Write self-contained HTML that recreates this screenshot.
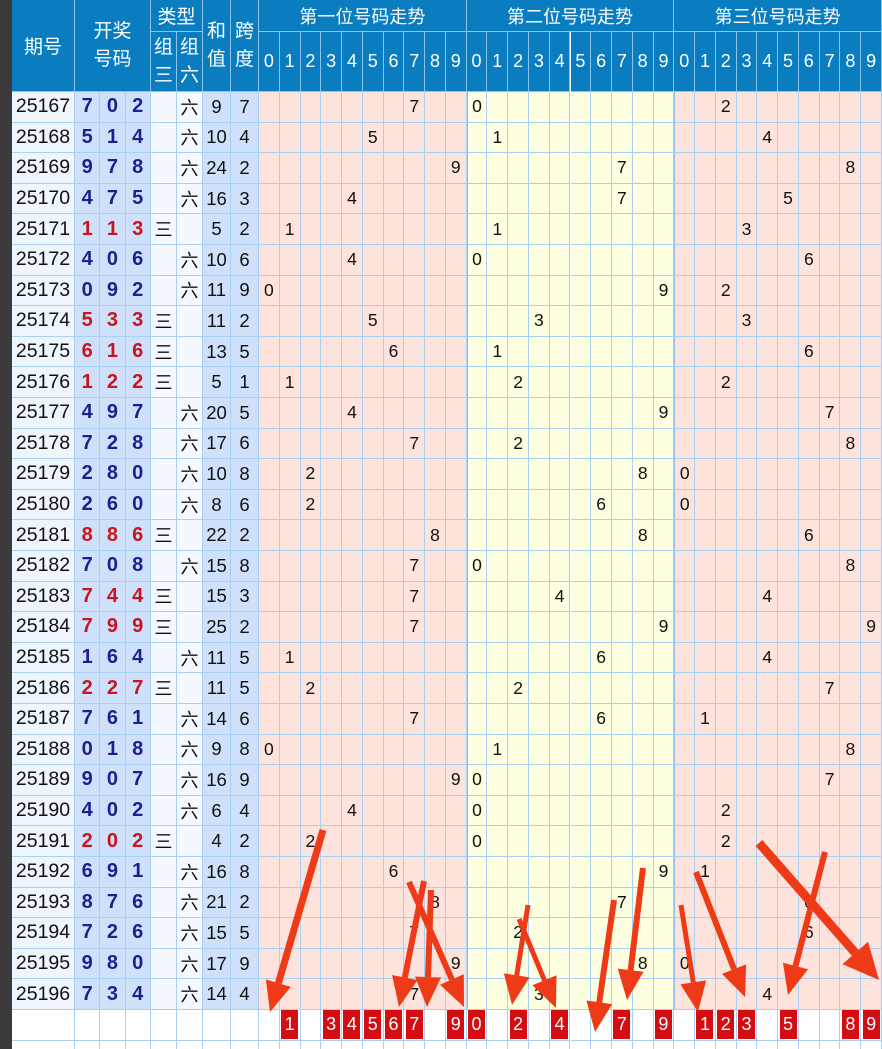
<!DOCTYPE html><html><head><meta charset="utf-8"><style>
html,body{margin:0;padding:0;width:882px;height:1049px;overflow:hidden;background:#fff;font-family:"Liberation Sans","Noto Sans CJK SC",sans-serif}
#c{position:relative;width:882px;height:1049px}
.d{position:absolute;box-sizing:border-box;display:flex;align-items:center;justify-content:center;color:#111}
.h{background:#0a7dc1;color:#fff;border-right:1.5px solid #8cc4ef;border-bottom:1.5px solid #8cc4ef}
.g{border-right:1px solid #a9d0f2;border-bottom:1px solid #a9d0f2}
</style></head><body><div id="c"></div>
<script>
var C=document.getElementById('c');
function D(x,y,w,h,cls,t,st){var e=document.createElement('div');e.className='d '+cls;e.style.cssText='left:'+x+'px;top:'+y+'px;width:'+w+'px;height:'+h+'px;'+(st||'');e.innerHTML=t||'';C.appendChild(e);return e;}
D(0,0,12,1049,'','','background:#3a3a3a');
var fs='font-size:19px;';
D(12,0,63,92,'h','期号',fs);
D(75,0,76,92,'h','开奖<br>号码',fs+'line-height:28px;text-align:center');
D(151,0,52,32,'h','类型',fs);
D(151,32,26,60,'h','组<br>三',fs+'line-height:28px;text-align:center');
D(177,32,26,60,'h','组<br>六',fs+'line-height:28px;text-align:center');
D(203,0,28,92,'h','和<br>值',fs+'line-height:28px;text-align:center');
D(231,0,28,92,'h','跨<br>度',fs+'line-height:28px;text-align:center');
var X0=259,W=(882-X0)/30;
var titles=['第一位号码走势','第二位号码走势','第三位号码走势'];
for(var g=0;g<3;g++){D(X0+g*10*W,0,10*W,32,'h',titles[g],'font-size:18px');
for(var k=0;k<10;k++)D(X0+(g*10+k)*W,32,W,60,'h',''+k,'font-size:18px');}
var data=[[25167,7,0,2,0,9,7],[25168,5,1,4,0,10,4],[25169,9,7,8,0,24,2],[25170,4,7,5,0,16,3],[25171,1,1,3,1,5,2],[25172,4,0,6,0,10,6],[25173,0,9,2,0,11,9],[25174,5,3,3,1,11,2],[25175,6,1,6,1,13,5],[25176,1,2,2,1,5,1],[25177,4,9,7,0,20,5],[25178,7,2,8,0,17,6],[25179,2,8,0,0,10,8],[25180,2,6,0,0,8,6],[25181,8,8,6,1,22,2],[25182,7,0,8,0,15,8],[25183,7,4,4,1,15,3],[25184,7,9,9,1,25,2],[25185,1,6,4,0,11,5],[25186,2,2,7,1,11,5],[25187,7,6,1,0,14,6],[25188,0,1,8,0,9,8],[25189,9,0,7,0,16,9],[25190,4,0,2,0,6,4],[25191,2,0,2,1,4,2],[25192,6,9,1,0,16,8],[25193,8,7,6,0,21,2],[25194,7,2,6,0,15,5],[25195,9,8,0,0,17,9],[25196,7,3,4,0,14,4]];
var RH=30.6,Y0=92;
data.forEach(function(r,i){var y=Y0+i*RH;
D(12,y,63,RH,'g',''+r[0],'background:#eef5fd;font-size:19.5px');
var col=r[4]?'#c8141e':'#1c1f8f';
for(var j=0;j<3;j++)D(75+j*25.3,y,25.3,RH,'g',''+r[1+j],'background:#cfe0fa;font-weight:bold;font-size:20px;color:'+col);
D(151,y,26,RH,'g',r[4]?'三':'','background:#f4f9ff;font-size:18px');
D(177,y,26,RH,'g',r[4]?'':'六','background:#f4f9ff;font-size:18px');
D(203,y,28,RH,'g',''+r[5],'background:#cfe0fa;font-size:18.5px');
D(231,y,28,RH,'g',''+r[6],'background:#cfe0fa;font-size:18.5px');
for(var c=0;c<30;c++){var g=Math.floor(c/10),k=c%10;var bg=g==1?'#fefee0':'#fde3dc';
D(X0+c*W,y,W,RH,'g',k==r[1+g]?''+k:'','background:'+bg+';font-size:17.5px'+(c%10==0&&c?';border-left:1.5px solid #8cc4ef':''));}
});
var yb=Y0+30*RH;
var hits=[[1,3,4,5,6,7,9],[0,2,4,7,9],[1,2,3,5,8,9]];
for(var rr=0;rr<2;rr++){var y=yb+rr*RH;
D(12,y,63,RH,'g');for(var j=0;j<3;j++)D(75+j*25.3,y,25.3,RH,'g');
D(151,y,26,RH,'g');D(177,y,26,RH,'g');D(203,y,28,RH,'g');D(231,y,28,RH,'g');
for(var c=0;c<30;c++){var g=Math.floor(c/10),k=c%10;var e=D(X0+c*W,y,W,RH,'g');
if(rr==0&&hits[g].indexOf(k)>=0){e.innerHTML='<span style="display:flex;align-items:center;justify-content:center;width:17px;height:29px;background:#d40d12;color:#fff;font-size:18px">'+k+'</span>';}}}
var A=[[323,830,270,1012,6],[424,881,399,1007,5],[409,882,464,1007,5],[431,890,427,1007,5],[528,905,512,1005,4],[519,919,556,1008,4],[614,900,595,1032,5],[643,868,627,1000,5],[681,905,698,1012,4],[696,872,745,997,5],[825,852,788,995,5],[759,843,879,980,8]];
var s='<svg width="882" height="1049" style="position:absolute;left:0;top:0">';
A.forEach(function(a){var dx=a[2]-a[0],dy=a[3]-a[1],L=Math.hypot(dx,dy),ux=dx/L,uy=dy/L,hl=a[4]>6?36:30,hw=a[4]>6?17:13;
var bx=a[2]-ux*hl,by=a[3]-uy*hl;
s+='<line x1="'+a[0]+'" y1="'+a[1]+'" x2="'+bx+'" y2="'+by+'" stroke="#ef3a17" stroke-width="'+(a[4]+1)+'"/>';
s+='<polygon fill="#ef3a17" points="'+a[2]+','+a[3]+' '+(bx-uy*hw)+','+(by+ux*hw)+' '+(bx+uy*hw)+','+(by-ux*hw)+'"/>';});
s+='</svg>';C.insertAdjacentHTML('beforeend',s);
</script></body></html>
